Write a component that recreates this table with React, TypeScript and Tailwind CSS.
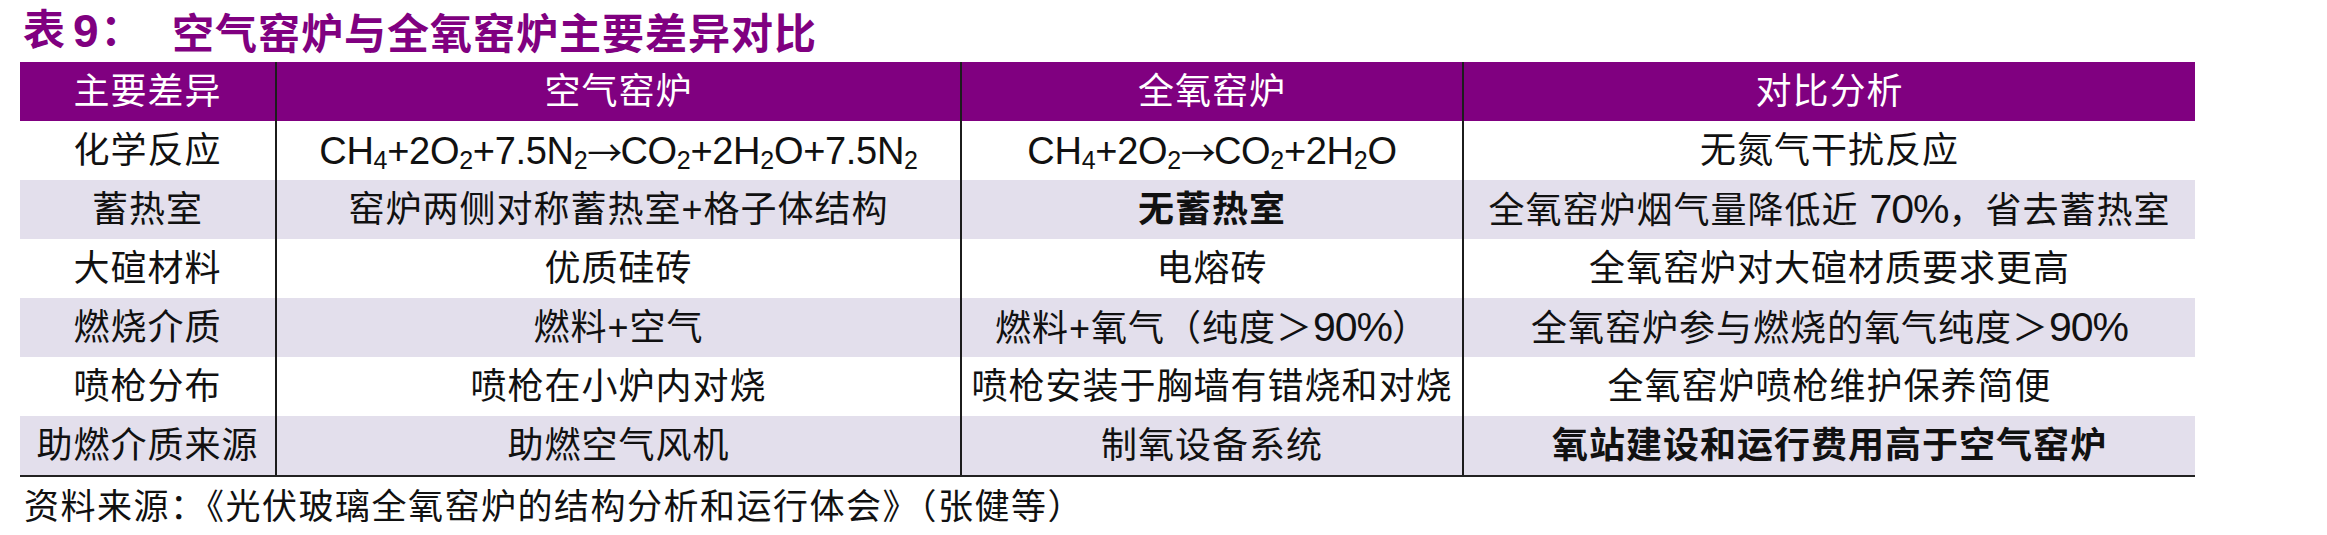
import React from "react";

const CJK = "font-['Liberation_Sans','Noto_Sans_CJK_SC',sans-serif]";

type Cell = React.ReactNode;

interface Row {
  cells: Cell[];
  bold?: boolean[];
}

// ── Chemical formula helpers ─────────────────────────────────────────────────

function Sub({ children }: { children: React.ReactNode }) {
  return <sub className="text-[25px] bottom-[-5px]">{children}</sub>;
}

function Arrow() {
  return (
    <span className="font-['Noto_Sans_CJK_SC',sans-serif] text-[35px] relative top-[2px] tracking-[-2px]">
      →
    </span>
  );
}

function Formula({ children }: { children: React.ReactNode }) {
  return (
    <span className="font-['Liberation_Sans',sans-serif] text-[38px] tracking-[-0.3px]">
      {children}
    </span>
  );
}

function Num({ children }: { children: React.ReactNode }) {
  return <span className="font-['Liberation_Sans',sans-serif] text-[41px] tracking-[-1px]">{children}</span>;
}

const airFormula = (
  <Formula>
    CH<Sub>4</Sub>+2O<Sub>2</Sub>+7.5N<Sub>2</Sub>
    <Arrow />
    CO<Sub>2</Sub>+2H<Sub>2</Sub>O+7.5N<Sub>2</Sub>
  </Formula>
);

const oxyFormula = (
  <Formula>
    CH<Sub>4</Sub>+2O<Sub>2</Sub>
    <Arrow />
    CO<Sub>2</Sub>+2H<Sub>2</Sub>O
  </Formula>
);

const headers = ["主要差异", "空气窑炉", "全氧窑炉", "对比分析"];

const rows: Row[] = [
  { cells: ["化学反应", airFormula, oxyFormula, "无氮气干扰反应"] },
  {
    cells: [
      "蓄热室",
      "窑炉两侧对称蓄热室+格子体结构",
      "无蓄热室",
      <>
        全氧窑炉烟气量降低近 <Num>70%</Num>，省去蓄热室
      </>,
    ],
    bold: [false, false, true, false],
  },
  { cells: ["大碹材料", "优质硅砖", "电熔砖", "全氧窑炉对大碹材质要求更高"] },
  {
    cells: [
      "燃烧介质",
      "燃料+空气",
      <>
        燃料+氧气（纯度＞<Num>90%</Num>）
      </>,
      <>
        全氧窑炉参与燃烧的氧气纯度＞<Num>90%</Num>
      </>,
    ],
  },
  { cells: ["喷枪分布", "喷枪在小炉内对烧", "喷枪安装于胸墙有错烧和对烧", "全氧窑炉喷枪维护保养简便"] },
  {
    cells: ["助燃介质来源", "助燃空气风机", "制氧设备系统", "氧站建设和运行费用高于空气窑炉"],
    bold: [false, false, false, true],
  },
];

const divider = "border-r-2 border-[#1c1c1c]";

export default function App() {
  return (
    <div className={`w-[2327px] h-[535px] bg-white overflow-hidden ${CJK}`}>
      {/* Title */}
      <div className="h-[62px] flex items-center pl-[23px] text-[#800080] font-bold text-[42px] leading-none">
        <span className="inline-flex items-center w-[149px]">
          <span>表</span>
          <span className="ml-[8px] font-['Liberation_Sans',sans-serif] text-[46px]">9</span>
          <span className="ml-[2px]">：</span>
        </span>
        <span className="tracking-[1px] font-['Noto_Sans_CJK_SC',sans-serif]">
          空气窑炉与全氧窑炉主要差异对比
        </span>
      </div>

      {/* Table */}
      <div className="ml-[20px] w-[2175px] border-b-2 border-[#222]">
        <div className="grid grid-cols-[257px_685px_502px_731px] h-[59px] bg-[#800080] text-white">
          {headers.map((h, i) => (
            <div
              key={h}
              className={`flex items-center justify-center text-[36px] tracking-[1px] leading-none ${
                i < 3 ? divider : ""
              }`}
            >
              {h}
            </div>
          ))}
        </div>

        {rows.map((row, r) => (
          <div
            key={r}
            className={`grid grid-cols-[257px_685px_502px_731px] h-[59px] text-[#111] ${
              r % 2 === 1 ? "bg-[#e3dfec]" : "bg-white"
            }`}
          >
            {row.cells.map((c, i) => (
              <div
                key={i}
                className={`flex items-center justify-center whitespace-nowrap text-[36px] tracking-[1px] leading-none ${
                  i < 3 ? divider : ""
                } ${row.bold?.[i] ? "font-bold" : ""}`}
              >
                <span>{c}</span>
              </div>
            ))}
          </div>
        ))}
      </div>

      {/* Source */}
      <div className="mt-[12px] pl-[24px] text-[35px] tracking-[1.5px] leading-[35px] text-[#111] whitespace-nowrap">
        资料来源：《光伏玻璃全氧窑炉的结构分析和运行体会》（张健等）
      </div>
    </div>
  );
}
